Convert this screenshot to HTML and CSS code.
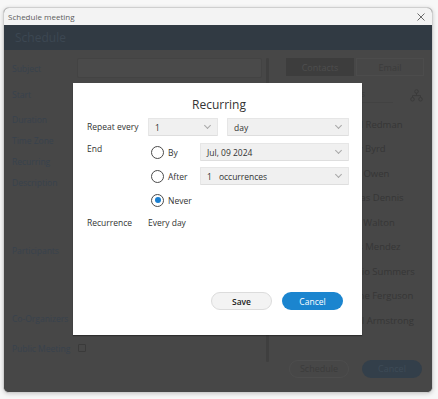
FILE: index.html
```html
<!DOCTYPE html>
<html lang="en">
<head>
<meta charset="utf-8">
<title>Schedule meeting</title>
<link rel="stylesheet" href="styles.css">
</head>
<body>
<div class="window">
  <div class="titlebar">
    <span class="title-text">Schedule meeting</span>
    <svg class="close" width="8" height="8" viewBox="0 0 8 8"><path d="M0.5 0.5L7.5 7.5M7.5 0.5L0.5 7.5" stroke="#5a5a5a" stroke-width="0.9" fill="none"/></svg>
  </div>
  <div class="header">Schedule</div>
  <div class="content">
    <div class="form">
      <div class="label">Subject</div><div class="input"></div>
      <div class="label">Start</div><div></div>
      <div class="label">Duration</div><div></div>
      <div class="label">Time Zone</div><div></div>
      <div class="label">Recurring</div><div></div>
      <div class="label">Description</div><div></div>
      <div class="label">Participants</div><div></div>
      <div class="label">Co-Organizers</div><div></div>
      <div class="label">Public Meeting</div><div><span class="checkbox"></span></div>
    </div>
    <div class="divider"></div>
    <div class="side">
      <div class="tabs">
        <div class="tab active">Contacts</div>
        <div class="tab">Email</div>
      </div>
      <div class="search">
        <div class="search-field">Search participants</div>
        <svg class="org" width="13" height="13" viewBox="0 0 13 13" fill="none" stroke="#3a3a3a" stroke-width="0.9"><circle cx="6.5" cy="2.5" r="1.8"/><circle cx="2.5" cy="10.3" r="1.8"/><circle cx="10.5" cy="10.3" r="1.8"/><path d="M6.5 4.3V6.6M2.5 8.5V6.6H10.5V8.5"/></svg>
      </div>
      <ul class="people">
        <li><span class="avatar"></span>Daniel Redman</li>
        <li><span class="avatar"></span>Nancy Byrd</li>
        <li><span class="avatar"></span>Grace Owen</li>
        <li><span class="avatar"></span>Thomas Dennis</li>
        <li><span class="avatar"></span>Helen Walton</li>
        <li><span class="avatar"></span>Carlos Mendez</li>
        <li><span class="avatar"></span>Antonio Summers</li>
        <li><span class="avatar"></span>Jasmine Ferguson</li>
        <li><span class="avatar"></span>Rachel Armstrong</li>
      </ul>
      <div class="actions">
        <div class="btn-outline">Schedule</div>
        <div class="btn-dim">Cancel</div>
      </div>
    </div>
  </div>
</div>

<div class="dialog">
  <div class="dialog-title">Recurring</div>
  <div class="dlg-grid">
    <div class="dlg-label">Repeat every</div>
    <div class="repeat">
      <div class="select small"><span>1</span><i class="chev"></i></div>
      <div class="select grow"><span>day</span><i class="chev"></i></div>
    </div>

    <div class="dlg-label end-label">End</div>
    <div class="options">
      <div class="option">
        <label class="radio"><span class="circle"></span>By</label>
        <div class="select grow"><span>Jul, 09 2024</span><i class="chev"></i></div>
      </div>
      <div class="option">
        <label class="radio"><span class="circle"></span>After</label>
        <div class="select grow"><span><span class="num">1</span>occurrences</span><i class="chev"></i></div>
      </div>
      <div class="option">
        <label class="radio"><span class="circle checked"></span>Never</label>
      </div>
    </div>

    <div class="dlg-label rec-label">Recurrence</div>
    <div class="rec-value">Every day</div>
  </div>
  <div class="dlg-buttons">
    <div class="btn save">Save</div>
    <div class="btn primary">Cancel</div>
  </div>
</div>
</body>
</html>
```

FILE: styles.css
```css
* { box-sizing: border-box; }
html, body { margin: 0; padding: 0; }
body {
  width: 438px;
  height: 399px;
  background: #f7f7f7;
  font-family: "Open Sans", "Noto Sans", sans-serif;
  font-size: 8.5px;
  position: relative;
  overflow: hidden;
}

.window {
  margin: 7px 0 0 3px;
  width: 430px;
  height: 386px;
  border-radius: 6px;
  overflow: hidden;
  border: 1px solid #cfcfcf;
  box-shadow: 0 1px 4px rgba(0,0,0,0.18);
  display: flex;
  flex-direction: column;
  background: #474747;
}

.titlebar {
  height: 17px;
  background: #f3f3f3;
  display: flex;
  align-items: center;
  justify-content: space-between;
  padding: 0 7px 0 4px;
  color: #5c5c5c;
  font-size: 8px;
}
.close { display: block; }

.header {
  height: 25px;
  background: #313a43;
  color: #3c4752;
  font-size: 12px;
  padding-left: 11px;
  display: flex;
  align-items: center;
}

.content {
  flex: 1;
  display: flex;
  background: #474747;
}

.form {
  width: 262px;
  padding-top: 8px;
  padding-left: 8px;
  display: grid;
  grid-template-columns: 65px 185px;
  grid-template-rows: 20px 32px 18px 24px 18px 24px 112px 24px 36px;
  align-items: center;
}
.label {
  color: #38424d;
  font-size: 8.5px;
  white-space: nowrap;
}
.input {
  height: 20px;
  background: #4a4a4a;
  border: 1px solid #434343;
  border-radius: 2px;
}
.checkbox {
  display: block;
  width: 8px;
  height: 8px;
  border: 1px solid #3a3a3a;
  border-radius: 1px;
  margin-left: 1px;
}

.divider {
  width: 3px;
  margin-top: 8px;
  height: 304px;
  background: #3f3f3f;
  border-radius: 1px;
}

.side {
  flex: 1;
  padding: 8px 8px 0 17px;
  display: flex;
  flex-direction: column;
}
.tabs {
  display: flex;
  gap: 2px;
  height: 18px;
}
.tab {
  flex: 1;
  display: flex;
  align-items: center;
  justify-content: center;
  color: #3b3b3b;
  border: 1px solid #4c4c4c;
  font-size: 9px;
}
.tab.active {
  background: #3d3d3d;
  color: #4e4e4e;
  border-color: #3d3d3d;
}
.search {
  margin-top: 10px;
  height: 17px;
  display: flex;
  align-items: center;
  justify-content: space-between;
}
.search-field {
  width: 107px;
  height: 17px;
  border-bottom: 1px solid #424242;
  color: #3d3d3d;
  font-size: 8.5px;
  padding-left: 3px;
  line-height: 15px;
}
.org { display: block; margin-right: 1px; margin-top: 2px; }

.people {
  list-style: none;
  margin: 9px 0 0 0;
  padding: 0;
}
.people li {
  height: 24.5px;
  display: flex;
  align-items: center;
  gap: 8px;
  padding-left: 23px;
  color: #363636;
  font-size: 9.5px;
  white-space: nowrap;
}
.avatar {
  width: 18px;
  height: 18px;
  border-radius: 50%;
  background: #3e3e3e;
}

.actions {
  margin-top: 27px;
  display: flex;
  gap: 13px;
  padding-left: 3px;
}
.btn-outline, .btn-dim {
  width: 60px;
  height: 18px;
  border-radius: 9px;
  display: flex;
  align-items: center;
  justify-content: center;
  font-size: 9px;
}
.btn-outline { border: 1px solid #4d4d4d; color: #3b3b3b; }
.btn-dim { background: #333f4a; color: #3e4b57; }

/* Recurring dialog */
.dialog {
  position: absolute;
  left: 73px;
  top: 83px;
  width: 289px;
  height: 252px;
  background: #ffffff;
  box-shadow: 0 1px 1px rgba(0,0,0,0.35);
  padding: 13px 13px 0 14px;
  color: #333333;
  font-size: 8.5px;
  display: flex;
  flex-direction: column;
}
.dialog-title {
  text-align: center;
  font-size: 12px;
  line-height: 16px;
  color: #333;
  padding-left: 2px;
  margin-top: 1px;
}
.dlg-grid {
  margin-top: 5px;
  display: grid;
  grid-template-columns: 61px 1fr;
  row-gap: 7px;
}
.dlg-label { line-height: 18px; white-space: nowrap; }
.end-label { line-height: 10px; padding-top: 1px; }
.repeat { display: flex; gap: 9px; }
.select {
  height: 18px;
  background: #f0f0f0;
  border: 1px solid #e6e6e6;
  border-bottom-color: #dedede;
  border-radius: 1px;
  display: flex;
  align-items: center;
  justify-content: space-between;
  padding: 0 6px 0 6px;
  color: #333;
  font-size: 8.5px;
}
.select.small { width: 70px; }
.select.grow { flex: 1; }
.num { margin-right: 7px; }
.chev {
  width: 5px;
  height: 5px;
  border-right: 1px solid #a8a8a8;
  border-bottom: 1px solid #a8a8a8;
  transform: rotate(45deg);
  margin-top: -3px;
  margin-right: 1px;
}
.options { display: flex; flex-direction: column; gap: 6px; }
.option { display: flex; align-items: center; height: 18px; }
.radio {
  width: 52px;
  display: flex;
  align-items: center;
  gap: 4px;
  padding-left: 3px;
}
.circle {
  width: 13px;
  height: 13px;
  border: 1px solid #4a4a4a;
  border-radius: 50%;
  background: #fff;
  position: relative;
}
.circle.checked::after {
  content: "";
  position: absolute;
  left: 2.5px;
  top: 2.5px;
  width: 6px;
  height: 6px;
  border-radius: 50%;
  background: #1a7fd0;
}
.rec-label, .rec-value { line-height: 16px; margin-top: -1px; }

.dlg-buttons {
  margin-top: auto;
  margin-bottom: 25px;
  display: flex;
  justify-content: flex-end;
  gap: 10px;
  padding-right: 6px;
}
.btn {
  width: 61px;
  height: 18px;
  border-radius: 9px;
  display: flex;
  align-items: center;
  justify-content: center;
  font-size: 8.5px;
}
.save {
  background: #f3f3f3;
  border: 1px solid #dcdcdc;
  color: #222;
  font-weight: 600;
}
.primary {
  background: #1b85cf;
  color: #ffffff;
}
```
